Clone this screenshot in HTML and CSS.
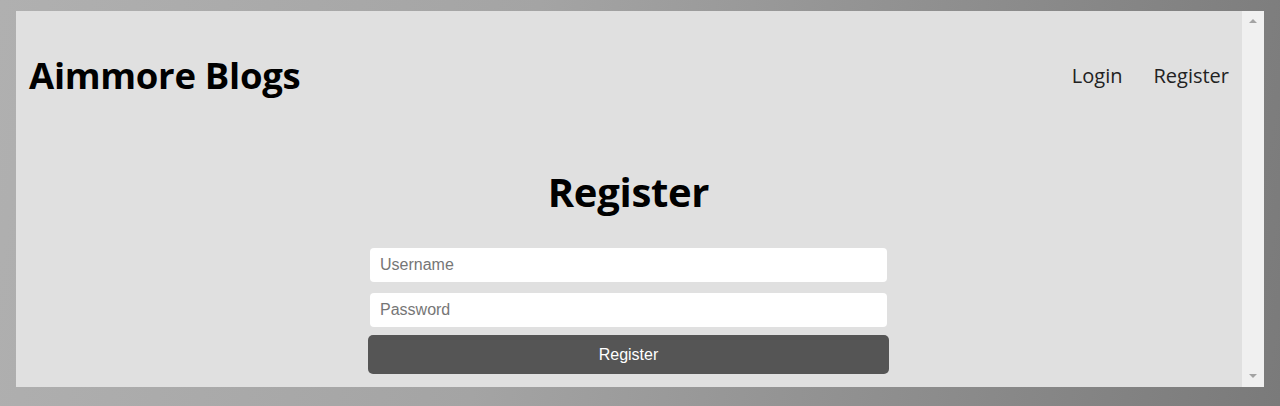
FILE: index.html
```html
<!DOCTYPE html>
<html lang="en">
<head>
<meta charset="utf-8">
<title>Aimmore Blogs</title>
<link rel="stylesheet" href="styles.css">
</head>
<body>
<div class="frame">
  <div class="page">
    <header class="header">
      <h1 class="brand">Aimmore Blogs</h1>
      <nav class="nav">
        <a class="nav-link" href="#">Login</a>
        <a class="nav-link" href="#">Register</a>
      </nav>
    </header>
    <main class="main">
      <h2 class="title">Register</h2>
      <form class="form">
        <input class="field" type="text" placeholder="Username">
        <input class="field" type="password" placeholder="Password">
        <button class="btn" type="button">Register</button>
      </form>
    </main>
  </div>
  <div class="scrollbar">
    <span class="arrow arrow-up"></span>
    <span class="arrow arrow-down"></span>
  </div>
</div>
</body>
</html>
```
FILE: styles.css
```css
html, body {
  margin: 0;
  padding: 0;
  height: 100%;
}
body {
  background: linear-gradient(100deg, #b0b0b0 0%, #a4a4a4 40%, #7a7a7a 100%);
  padding: 11px 16px 0 16px;
  box-sizing: border-box;
}
.frame {
  display: flex;
  width: 1248px;
  height: 376px;
  overflow: hidden;
}
.page {
  flex: 1;
  background: #e0e0e0;
  font-family: "Open Sans", "Noto Sans", sans-serif;
  color: #000;
}
.header {
  display: flex;
  justify-content: space-between;
  align-items: center;
  height: 128px;
  padding: 0 13px 0 13px;
}
.brand {
  margin: 0;
  font-size: 36.5px;
  font-weight: 700;
  letter-spacing: -0.3px;
}
.nav {
  display: flex;
  gap: 31px;
}
.nav-link {
  color: #222;
  text-decoration: none;
  font-size: 20px;
}
.main {
  display: flex;
  flex-direction: column;
  align-items: center;
  padding-right: 1px;
}
.title {
  margin: 26px 0 29px 0;
  font-size: 40px;
  font-weight: 700;
  line-height: 54px;
  letter-spacing: -0.3px;
}
.form {
  display: flex;
  flex-direction: column;
  align-items: center;
  width: 521px;
  gap: 11px;
}
.field {
  box-sizing: border-box;
  width: 517px;
  height: 34px;
  border: none;
  border-radius: 4px;
  background: #fff;
  padding: 0 10px;
  font-family: "Liberation Sans", Arial, sans-serif;
  font-size: 16px;
  color: #333;
}
.field::placeholder {
  color: #767676;
}
.btn {
  box-sizing: border-box;
  width: 521px;
  height: 39px;
  margin-top: -3px;
  border: none;
  border-radius: 5px;
  background: #555;
  color: #fff;
  font-family: "Liberation Sans", Arial, sans-serif;
  font-size: 16px;
}
.scrollbar {
  width: 22px;
  background: #f0f0f0;
  position: relative;
}
.arrow {
  position: absolute;
  left: 7px;
  width: 0;
  height: 0;
  border-left: 4px solid transparent;
  border-right: 4px solid transparent;
}
.arrow-up {
  top: 8px;
  border-bottom: 4px solid #a3a3a3;
}
.arrow-down {
  bottom: 9px;
  border-top: 4px solid #a3a3a3;
}
```
